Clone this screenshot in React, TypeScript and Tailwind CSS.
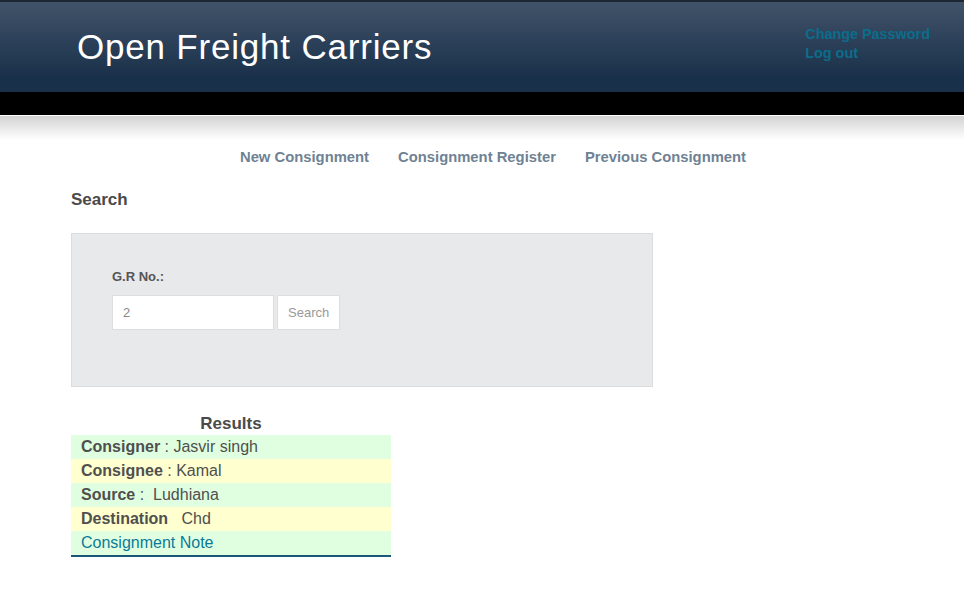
import React from 'react';

interface Row {
  label: string;
  sep: string;
  value: string;
  bg: string;
}

const rows: Row[] = [
  { label: 'Consigner', sep: ' : ', value: 'Jasvir singh', bg: 'bg-[#e0ffe0]' },
  { label: 'Consignee', sep: ' : ', value: 'Kamal', bg: 'bg-[#ffffd0]' },
  { label: 'Source', sep: ' :  ', value: 'Ludhiana', bg: 'bg-[#e0ffe0]' },
  { label: 'Destination', sep: '   ', value: 'Chd', bg: 'bg-[#ffffd0]' },
];

const App: React.FC = () => {
  return (
    <div className="min-h-[597px] bg-white font-['Liberation_Sans',Arial,sans-serif] text-[#4f4f4f]">
      {/* Header */}
      <header className="border-t-2 border-[#1d2633] bg-gradient-to-b from-[#415369] to-[#19304a] to-[85%] h-[92px]">
        <div className="flex justify-between pl-[77px] pr-[34px]">
          <h1 className="pt-[25px] text-[35px] leading-[40px] tracking-[0.8px] text-white">
            Open Freight Carriers
          </h1>
          <div className="flex flex-col pt-[23px] text-[14.4px] leading-[19px] font-bold text-[#0b6d8b]">
            <a href="#">Change Password</a>
            <a href="#">Log out</a>
          </div>
        </div>
      </header>
      <div className="h-[24px] bg-black border-b border-white"></div>
      <div className="h-[24px] bg-gradient-to-b from-[#d3d3d3] to-white"></div>

      {/* Nav */}
      <nav className="flex justify-center gap-[29px] pt-[7px] text-[14.8px] leading-[20px] font-bold text-[#6f8293] pl-[22px]">
        <a href="#">New Consignment</a>
        <a href="#">Consignment Register</a>
        <a href="#">Previous Consignment</a>
      </nav>

      <div className="pl-[71px]">
        <h2 className="pt-[23px] text-[17px] leading-[20px] font-bold text-[#4a4a4a]">Search</h2>

        <div className="mt-[23px] w-[582px] h-[154px] bg-[#e8e9eb] border border-[#dbdcde] pl-[40px] pt-[35px]">
          <label className="block text-[13px] leading-[16px] font-bold text-[#555]">G.R No.:</label>
          <div className="flex gap-[3px] mt-[10px]">
            <input
              defaultValue="2"
              className="w-[162px] h-[35px] bg-white border border-[#dedede] px-[10px] text-[13px] text-[#888] outline-none"
            />
            <button className="h-[35px] px-[10px] bg-white border border-[#dedede] text-[13px] text-[#999]">
              Search
            </button>
          </div>
        </div>

        {/* Results */}
        <div className="mt-[26px] w-[320px]">
          <div className="text-center text-[17px] leading-[22px] font-bold text-[#4a4a4a]">Results</div>
          <div className="border-b-2 border-[#1b5877]">
            {rows.map((r) => (
              <div key={r.label} className={`${r.bg} h-[24px] pl-[10px] text-[16px] leading-[24px] whitespace-pre`}>
                <span className="font-bold">{r.label}</span>
                {r.sep}
                {r.value}
              </div>
            ))}
            <div className="bg-[#e0ffe0] h-[24px] pl-[10px] text-[16px] leading-[24px]">
              <a href="#" className="text-[#0b7a98]">Consignment Note</a>
            </div>
          </div>
        </div>
      </div>
    </div>
  );
};

export default App;
